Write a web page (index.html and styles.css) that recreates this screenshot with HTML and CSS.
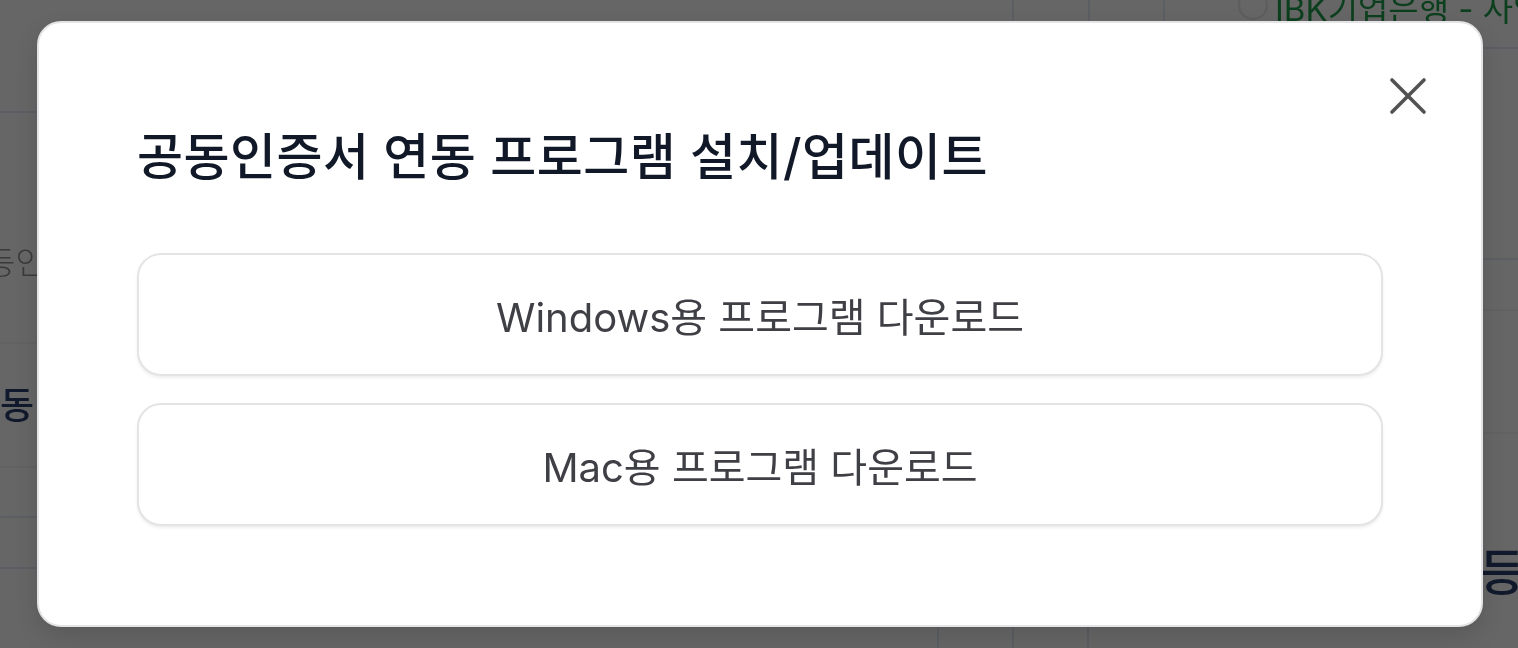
FILE: index.html
```html
<!DOCTYPE html>
<html lang="ko">
<head>
<meta charset="utf-8">
<title>공동인증서 연동 프로그램 설치/업데이트</title>
<link rel="stylesheet" href="styles.css">
</head>
<body>
  <div class="page" aria-hidden="true">
    <span class="line h left l1"></span>
    <span class="line h left l2 faint"></span>
    <span class="line h left l3 faint"></span>
    <span class="line h left l4"></span>
    <span class="line h left l5"></span>
    <span class="line h right r0"></span>
    <span class="line h right r1"></span>
    <span class="line h right r2 faint"></span>
    <span class="line h right r3 faint"></span>
    <span class="line v t1"></span>
    <span class="line v t2"></span>
    <span class="line v t3"></span>
    <span class="line v b1"></span>
    <span class="line v b2"></span>
    <span class="line v b3"></span>
    <span class="frag ibk"><span class="radio"></span>IBK기업은행 - 사업자</span>
    <span class="frag cert">등인증서</span>
    <span class="frag link">연동</span>
    <span class="frag reg">등록</span>
  </div>

  <div class="overlay">
    <div class="modal" role="dialog" aria-labelledby="modal-title">
      <button class="close" type="button" aria-label="닫기">
        <svg viewBox="0 0 40 40" width="40" height="40" aria-hidden="true">
          <path d="M4 4 L36 36 M36 4 L4 36" fill="none" stroke="currentColor" stroke-width="3.6" stroke-linecap="round"/>
        </svg>
      </button>
      <h2 class="title" id="modal-title">공동인증서 연동 프로그램 설치/업데이트</h2>
      <div class="actions">
        <button class="download" type="button">Windows용 프로그램 다운로드</button>
        <button class="download" type="button">Mac용 프로그램 다운로드</button>
      </div>
    </div>
  </div>
</body>
</html>
```

FILE: styles.css
```css
* {
  box-sizing: border-box;
}

html,
body {
  margin: 0;
  padding: 0;
  width: 100%;
  height: 100%;
  overflow: hidden;
}

body {
  background: #666666;
  font-family: Inter, "Noto Sans CJK KR", "Noto Sans", sans-serif;
}

/* ---------- dimmed page behind the dialog ---------- */
.page {
  position: fixed;
  inset: 0;
  background: #666666;
}

.line {
  position: absolute;
  background: #5b5e62;
}

.line.faint {
  background: #626262;
}

.line.h {
  height: 2px;
}

.line.h.left {
  left: 0;
  width: 60px;
}

.line.h.right {
  left: 1460px;
  right: 0;
}

.line.v {
  width: 2px;
}

.l1 { top: 111px; }
.l2 { top: 342px; }
.l3 { top: 466px; }
.l4 { top: 516px; }
.l5 { top: 567px; }
.r0 { top: 47px; }
.r1 { top: 258px; }
.r2 { top: 309px; }
.r3 { top: 432px; }

.t1, .t2, .t3 { top: 0; height: 30px; }
.t1 { left: 1012px; }
.t2 { left: 1088px; }
.t3 { left: 1163px; }

.b1, .b2, .b3 { top: 610px; bottom: 0; }
.b1 { left: 937px; }
.b2 { left: 1012px; }
.b3 { left: 1087px; }

.frag {
  position: absolute;
  white-space: nowrap;
  line-height: 1;
}

.ibk {
  left: 1238px;
  top: -7px;
  font-size: 33px;
  color: #0c3f1d;
  display: flex;
  align-items: center;
  gap: 7px;
}

.radio {
  width: 30px;
  height: 30px;
  border-radius: 50%;
  border: 2px solid #5d5d5d;
  margin-top: -10px;
}

.cert {
  left: -14px;
  top: 247px;
  font-size: 32px;
  color: #3a3a3a;
  font-weight: 300;
}

.link {
  left: -34px;
  top: 387px;
  font-size: 37px;
  color: #111a2c;
  font-weight: 500;
}

.reg {
  left: 1479px;
  top: 548px;
  font-size: 50px;
  color: #111a2c;
  font-weight: 500;
}

/* ---------- dialog ---------- */
.overlay {
  position: fixed;
  inset: 0;
  display: flex;
  align-items: center;
  justify-content: center;
}

.modal {
  position: relative;
  width: 1446px;
  margin-left: 2px;
  background: #ffffff;
  border: 2px solid #e4e4e7;
  border-radius: 24px;
  padding: 106px 98px 99px;
  box-shadow: 0 10px 24px rgba(0, 0, 0, 0.12);
}

.close {
  position: absolute;
  top: 53px;
  right: 53px;
  width: 40px;
  height: 40px;
  padding: 0;
  border: 0;
  background: transparent;
  color: #525252;
  cursor: pointer;
  display: flex;
}

.title {
  margin: 0;
  font-size: 50px;
  line-height: 56px;
  font-weight: 500;
  color: #111827;
  letter-spacing: 0.5px;
}

.actions {
  margin-top: 68px;
  display: flex;
  flex-direction: column;
  gap: 27px;
}

.download {
  height: 123px;
  width: 100%;
  background: #ffffff;
  border: 2px solid #e4e4e7;
  border-radius: 24px;
  box-shadow: 0 2px 3px rgba(0, 0, 0, 0.07);
  font-family: Inter, "Noto Sans CJK KR", "Noto Sans", sans-serif;
  font-size: 40px;
  font-weight: 400;
  color: #3f3f46;
  cursor: pointer;
  padding: 0;
}
```
